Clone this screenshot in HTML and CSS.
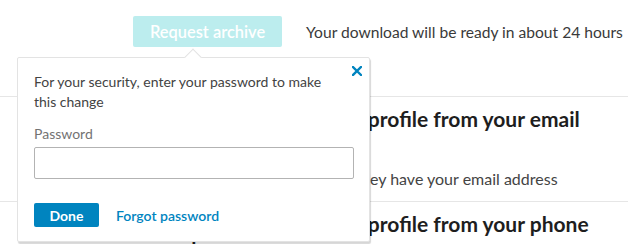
FILE: index.html
```html
<!DOCTYPE html>
<html lang="en">
<head>
<meta charset="utf-8">
<title>Privacy settings</title>
<link rel="stylesheet" href="styles.css">
</head>
<body>
<div class="page">
  <div class="archive-row">
    <button class="btn-archive" type="button">Request archive</button>
    <span class="archive-status">Your download will be ready in about 24 hours</span>
  </div>

  <section class="setting">
    <h3 class="setting-title">Who can discover your profile from your email address</h3>
    <p class="setting-desc">Choose who can find you if they have your email address</p>
  </section>

  <section class="setting">
    <h3 class="setting-title">Who can discover your profile from your phone number</h3>
  </section>

  <div class="popover">
    <span class="popover-arrow"></span>
    <button class="popover-close" type="button" aria-label="Close">
      <svg width="10" height="10" viewBox="0 0 10 10"><path d="M1 1 L9 9 M9 1 L1 9" stroke="#0084bf" stroke-width="2.4" stroke-linecap="square"/></svg>
    </button>
    <p class="popover-text">For your security, enter your password to make this change</p>
    <label class="popover-label" for="pw">Password</label>
    <input class="popover-input" id="pw" type="password">
    <div class="popover-actions">
      <button class="btn-done" type="button">Done</button>
      <a class="link-forgot" href="#">Forgot password</a>
    </div>
  </div>
</div>
</body>
</html>
```

FILE: styles.css
```css
* { box-sizing: border-box; }

html, body {
  margin: 0;
  background: #ffffff;
  font-family: Lato, "Open Sans", sans-serif;
  color: #333333;
}

.page {
  position: relative;
  width: 628px;
  height: 244px;
  overflow: hidden;
}

.archive-row {
  display: flex;
  align-items: center;
  gap: 24px;
  padding: 16px 0 49px 133px;
  border-bottom: 1px solid #e6e6e6;
}

.btn-archive {
  height: 31px;
  padding: 0 17px;
  border: 0;
  border-radius: 2px;
  background: #bcedee;
  color: #ffffff;
  font-family: inherit;
  font-size: 16.4px;
  font-weight: 600;
  white-space: nowrap;
}

.archive-status {
  font-size: 15.6px;
  color: #3a3a3a;
  white-space: nowrap;
}

.setting {
  padding: 10px 8px 12px 150px;
  border-bottom: 1px solid #e6e6e6;
}

.setting-title {
  margin: 0;
  font-size: 21px;
  line-height: 24px;
  font-weight: 700;
  color: #1e1e1e;
}

.setting-desc {
  margin: 14px 0 0 11px;
  font-size: 16px;
  line-height: 20px;
  color: #444444;
}

.popover {
  position: absolute;
  left: 17px;
  top: 57px;
  width: 353px;
  padding: 14px 15px 14px 16px;
  background: #ffffff;
  border: 1px solid #e3e3e3;
  border-radius: 2px;
  box-shadow: 1px 2px 1px rgba(0, 0, 0, 0.16);
}

.popover-arrow {
  position: absolute;
  left: 169px;
  top: -7.5px;
  width: 12px;
  height: 12px;
  background: #ffffff;
  border-top: 1px solid #e3e3e3;
  border-left: 1px solid #e3e3e3;
  transform: rotate(45deg);
}

.popover-close {
  position: absolute;
  right: 7px;
  top: 8px;
  width: 10px;
  height: 10px;
  padding: 0;
  border: 0;
  background: none;
  display: flex;
}

.popover-text {
  margin: 0;
  padding-right: 24px;
  font-size: 14px;
  line-height: 20px;
  color: #434343;
}

.popover-label {
  display: block;
  margin-top: 12px;
  font-size: 14px;
  line-height: 20px;
  color: #737373;
}

.popover-input {
  display: block;
  width: 320px;
  height: 32px;
  margin-top: 3px;
  border: 1px solid #b3b3b3;
  border-radius: 2px;
  background: #ffffff;
}

.popover-actions {
  display: flex;
  align-items: center;
  gap: 17px;
  margin-top: 24px;
}

.btn-done {
  width: 65px;
  height: 24px;
  padding: 0;
  border: 0;
  border-radius: 2px;
  background: #0084bf;
  color: #ffffff;
  font-family: inherit;
  font-size: 14px;
  font-weight: 700;
}

.link-forgot {
  font-size: 14px;
  font-weight: 600;
  color: #0084bf;
  text-decoration: none;
}
```
